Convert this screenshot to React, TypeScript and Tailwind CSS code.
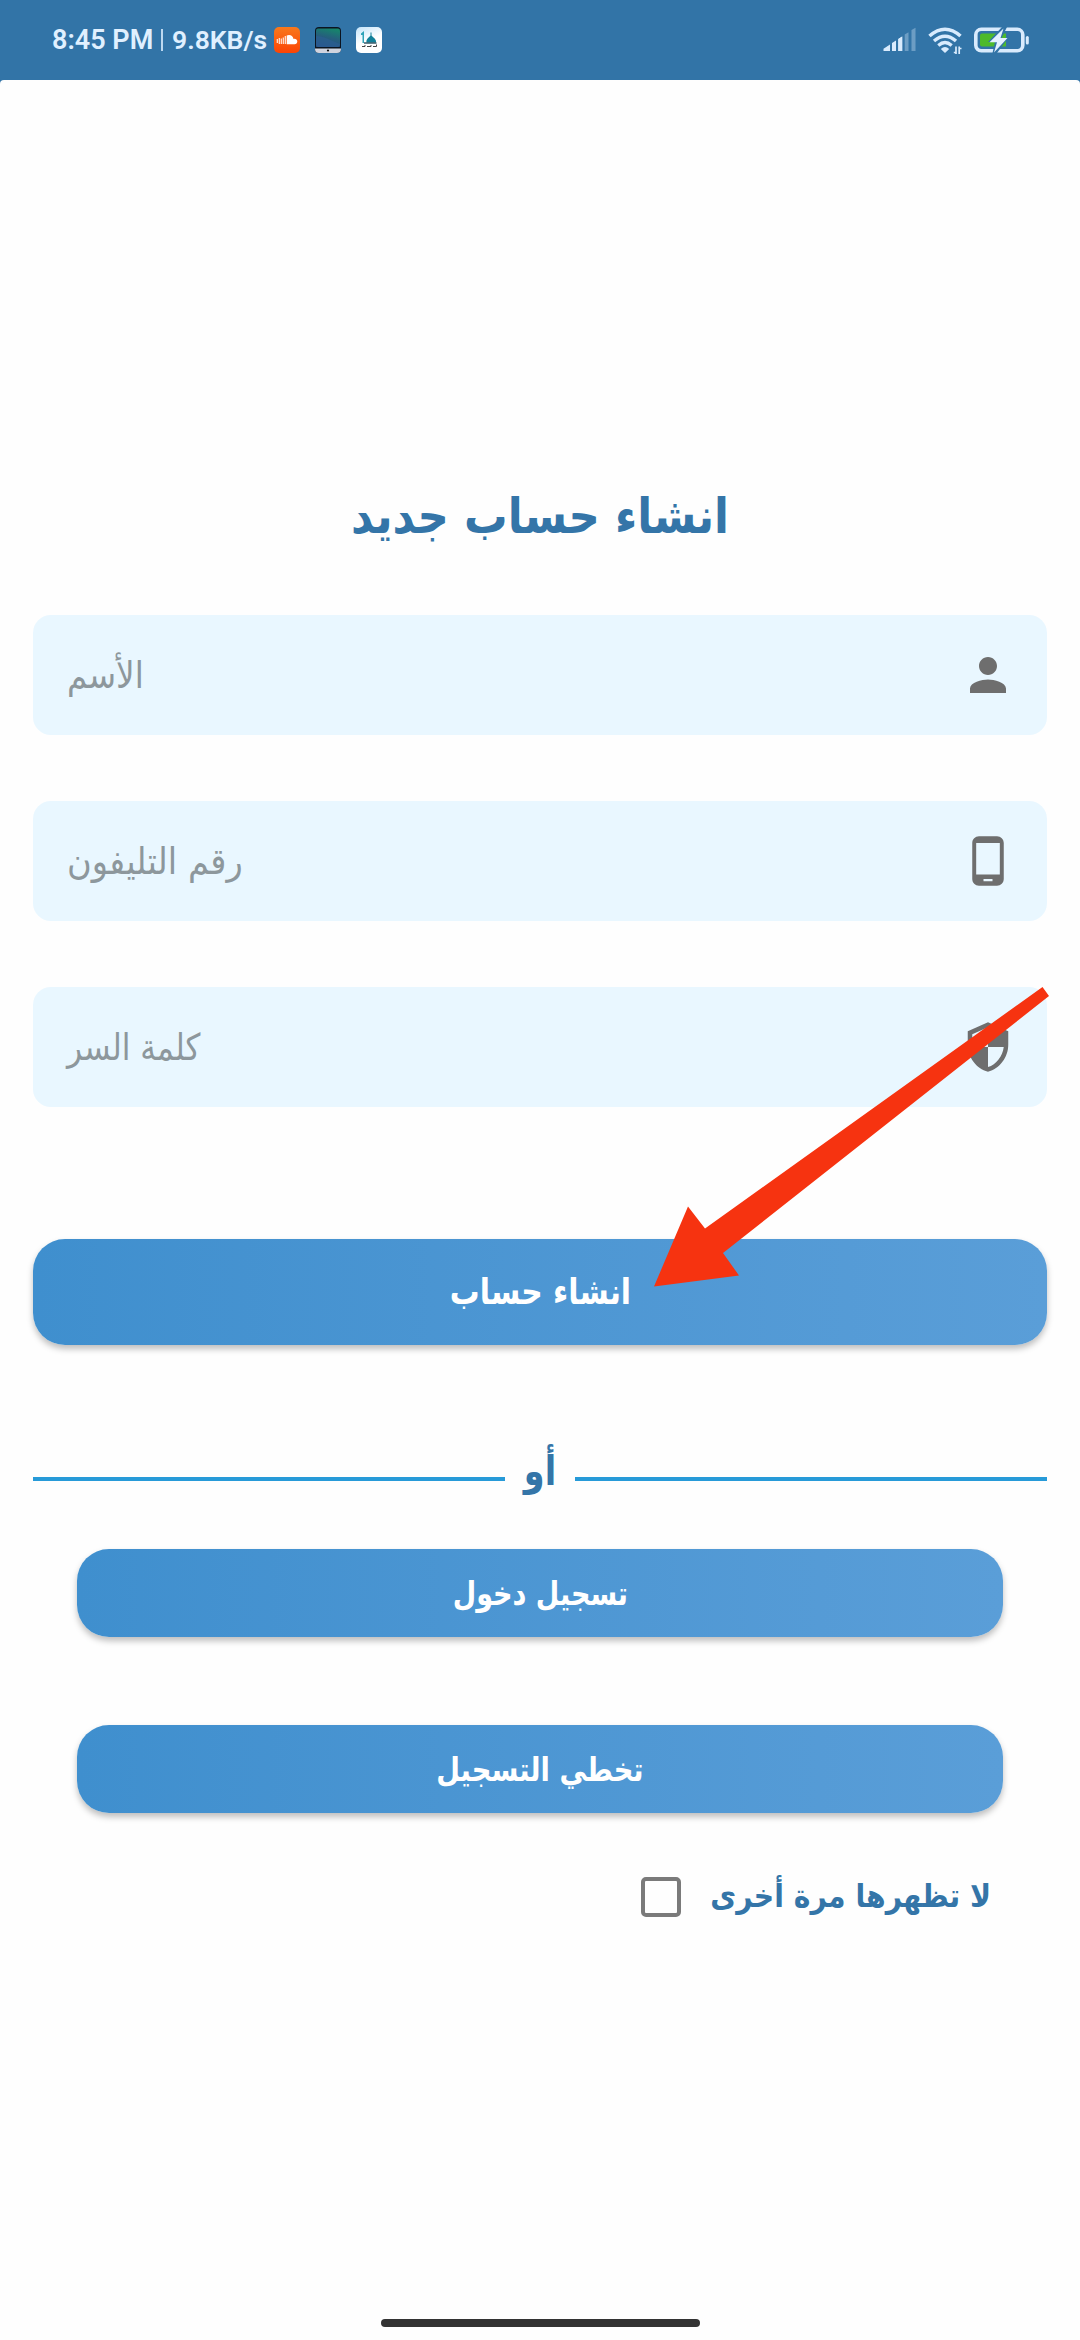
import type { ReactNode } from 'react';
import { MdPerson, MdPhoneAndroid, MdSecurity } from 'react-icons/md';

function SoundCloudIcon() {
  return (
    <svg viewBox="0 0 26 26" className="size-[26px]">
      <defs>
        <linearGradient id="sc" x2="0" y2="1">
          <stop stopColor="#f8791c" />
          <stop offset="1" stopColor="#fc4404" />
        </linearGradient>
      </defs>
      <rect width="26" height="26" rx="5" fill="url(#sc)" />
      <path d="M3.3 12v4M5.3 11v6M7.3 11.500v5.500M9.3 10.500v6.500M11.3 9v8" stroke="#ffe9dc" strokeWidth="1.200" />
      <path d="M12.700 8.600c3-1.600 6.300.2 6.800 3.300 2-.6 3.800.8 3.800 2.600 0 1.500-1.200 2.700-2.700 2.700h-7.900z" fill="#fff" />
    </svg>
  );
}

function MonitorIcon() {
  return (
    <svg viewBox="0 0 26 26" className="size-[26px]">
      <defs>
        <linearGradient id="scr" x1="0.7" x2="0.4" y2="1">
          <stop stopColor="#16866b" />
          <stop offset="0.5" stopColor="#255f7d" />
          <stop offset="1" stopColor="#23508a" />
        </linearGradient>
      </defs>
      <rect width="26" height="26" rx="4" fill="#0b1420" />
      <rect x="1" y="1.500" width="24" height="18.500" rx="2" fill="url(#scr)" />
      <path d="M1 9c8 0 13 4 24 8v3H1z" fill="#2d5f93" opacity=".6" />
      <path d="M0 21.500h26v.5a4 4 0 0 1-4 4H4a4 4 0 0 1-4-4z" fill="#cfd3de" />
      <circle cx="13" cy="23.500" r="1.100" fill="#111" />
    </svg>
  );
}

function MosqueIcon() {
  return (
    <svg viewBox="0 0 26 26" className="size-[26px]">
      <defs>
        <linearGradient id="msq" x2="0.4" y2="1">
          <stop stopColor="#c3e4fa" />
          <stop offset="0.6" stopColor="#fff" />
        </linearGradient>
      </defs>
      <rect width="26" height="26" rx="5" fill="url(#msq)" />
      <path d="M5 6.500l3-2.500v12H6.500V8H5z" fill="#2fa3b8" />
      <path d="M10.500 15.500c-.6-3.500 2-4.500 4.500-7.500 2.500 3 5.600 4 5 7.500z" fill="#12809a" />
      <path d="M15 5.500v3" stroke="#12809a" strokeWidth="1" />
      <path d="M8 16h12.500" stroke="#173f50" strokeWidth="1.300" />
      <path d="M6 19.500h3v-1.500M11 19.500h4V18M17 19.500h3.500v-2" stroke="#444" strokeWidth="1" fill="none" />
    </svg>
  );
}

function SignalIcon() {
  return (
    <svg viewBox="0 0 34 26" className="h-[26px] w-[34px]" fill="#d9ebfd">
      <path d="M.5 24v-2.300L7 17.500V24z" />
      <path d="M9 24v-8l4-2.500V24zM15.300 24V12l3.900-2.500V24z" />
      <path d="M21.700 24V7.500l3.800-2.300V24zM28.500 24V3l4-2.300V24z" opacity=".35" />
      <path d="M15.300 24V12l3.900-2.500V24z" />
    </svg>
  );
}

function WifiIcon() {
  return (
    <svg viewBox="0 0 34 28" className="h-[28px] w-[34px]" fill="none" stroke="#d9ebfd">
      <path d="M1.500 9q15.500-13.500 31 0" strokeWidth="3.600" />
      <path d="M6 14q11-9.500 22 0" strokeWidth="3.400" />
      <path d="M10.300 18.500q6.700-6 13.400 0" strokeWidth="3.200" />
      <path d="M12.800 22q4.200-4 8.400 0l-4.200 4z" fill="#d9ebfd" stroke="none" />
      <path d="M28 19.500V27M28.500 25.500h-2.700M31.200 27v-7.500M30.700 21.500h2.800" strokeWidth="1.700" />
    </svg>
  );
}

function BatteryIcon() {
  return (
    <svg viewBox="0 0 56 26" className="h-[26px] w-[56px]">
      <rect x="1.800" y="2.300" width="47" height="21.500" rx="5.500" fill="none" stroke="#d9ebfd" strokeWidth="3.600" />
      <path d="M8 6.500h24V19.500H8a2 2 0 0 1-2-2v-9a2 2 0 0 1 2-2z" fill="#4dba2c" />
      <rect x="51.800" y="9" width="3" height="8.500" rx="1.500" fill="#d9ebfd" />
      <path d="M28 0L14 15h7L18.500 26h4.500L34 11h-6.500L33 0z" fill="#3274a7" />
      <path d="M29.500 1.500L15.500 15.200h7.500L20 25.500 33.500 11h-7z" fill="#e4f1ff" />
    </svg>
  );
}

function StatusBar() {
  return (
    <header className="flex h-20 items-center bg-[#3274a7] pr-[50px] pl-[52px]">
      <div className="flex flex-1 items-center font-['Roboto',sans-serif] text-[27px] leading-8 font-semibold whitespace-nowrap text-[#e0f0ff]">
        <span className="w-[101px]">8:45 PM</span>
        <span className="mr-[9px] ml-2 h-[22px] w-[2px] bg-[#bcd8f0]" />
        <span className="w-[102px] text-[26.5px]">9.8KB/s</span>
        <div className="flex gap-[15px]">
          <SoundCloudIcon />
          <MonitorIcon />
          <MosqueIcon />
        </div>
      </div>
      <div className="flex items-center">
        <SignalIcon />
        <div className="mt-[1px] ml-[11px]">
          <WifiIcon />
        </div>
        <div className="ml-3">
          <BatteryIcon />
        </div>
      </div>
    </header>
  );
}

function Field({ label, icon, labelClass }: { label: string; icon: ReactNode; labelClass: string }) {
  return (
    <div className="flex h-[120px] items-center justify-between rounded-[18px] bg-[#e9f7ff] pr-8 pl-[34px]">
      <span dir="rtl" className={`origin-left font-['DejaVu_Sans',sans-serif] text-[34px] text-[#8d979c] ${labelClass}`}>
        {label}
      </span>
      <span className="text-[54px] text-[#6e6e6e]">{icon}</span>
    </div>
  );
}

function Button({ label, className, labelClass }: { label: string; className: string; labelClass: string }) {
  return (
    <button
      dir="rtl"
      className={`flex items-center justify-center rounded-[32px] bg-linear-to-l from-[#5a9ed8] to-[#3f8fce] font-['DejaVu_Sans',sans-serif] font-bold text-white shadow-[0_4px_6px_rgba(0,0,0,0.25)] ${className}`}
    >
      <span className={labelClass}>{label}</span>
    </button>
  );
}

export default function App() {
  return (
    <div className="relative h-[2340px] w-[1080px] overflow-hidden bg-[#3274a7]">
      <StatusBar />
      <main className="flex h-[2260px] flex-col rounded-t-[4px] bg-[#fefefe] px-[33px] font-['DejaVu_Sans',sans-serif]">
        <h1
          dir="rtl"
          className="mt-[404px] h-16 scale-y-[1.12] text-center text-[43.5px] leading-[64px] font-bold text-[#3475a8]"
        >
          انشاء حساب جديد
        </h1>
        <div className="mt-[67px] flex flex-col gap-[66px]">
          <Field label="الأسم" icon={<MdPerson />} labelClass="scale-x-[0.96] scale-y-[1.08]" />
          <Field label="رقم التليفون" icon={<MdPhoneAndroid />} labelClass="scale-x-[0.99] scale-y-[1.08]" />
          <Field label="كلمة السر" icon={<MdSecurity />} labelClass="scale-x-[0.92] scale-y-[1.08]" />
        </div>
        <Button
          label="انشاء حساب"
          className="mt-[132px] h-[106px] text-[32px]"
          labelClass="scale-x-[0.93] scale-y-[1.12]"
        />
        <div className="mt-[90px] flex h-[84px] items-center">
          <span className="mt-[4px] h-1 flex-1 bg-[#279ad8]" />
          <span
            dir="rtl"
            className="mb-3 w-[70px] scale-x-[0.93] scale-y-[1.15] text-center text-[36px] leading-[72px] font-bold text-[#3475a8]"
          >
            أو
          </span>
          <span className="mt-[4px] h-1 flex-1 bg-[#279ad8]" />
        </div>
        <div className="mt-[30px] flex flex-col gap-[88px] px-11">
          <Button label="تسجيل دخول" className="h-[88px] text-[30px]" labelClass="scale-x-[0.9] scale-y-[1.1]" />
          <Button label="تخطي التسجيل" className="h-[88px] text-[30px]" labelClass="scale-x-[0.91] scale-y-[1.1]" />
        </div>
        <label dir="rtl" className="mt-[54px] flex h-[60px] items-center pr-[56px]">
          <span className="w-[282px] origin-right scale-x-[1.01] scale-y-[1.15] text-[28px] font-bold whitespace-nowrap text-[#3475a8]">
            لا تظهرها مرة أخرى
          </span>
          <span className="mr-[28px] size-10 rounded-[5px] border-4 border-[#7a7a7a]" />
        </label>
        <div className="mx-auto mt-auto mb-[13px] h-2 w-[319px] rounded-full bg-[#333]" />
      </main>
      <svg viewBox="0 0 396 300" className="absolute top-[987px] left-[654px] h-[300px] w-[396px]">
        <path d="M388.500 0L395 9 69 266 85 288.500 0 299.500 34 219.500 51 241.500z" fill="#f63310" />
      </svg>
    </div>
  );
}
